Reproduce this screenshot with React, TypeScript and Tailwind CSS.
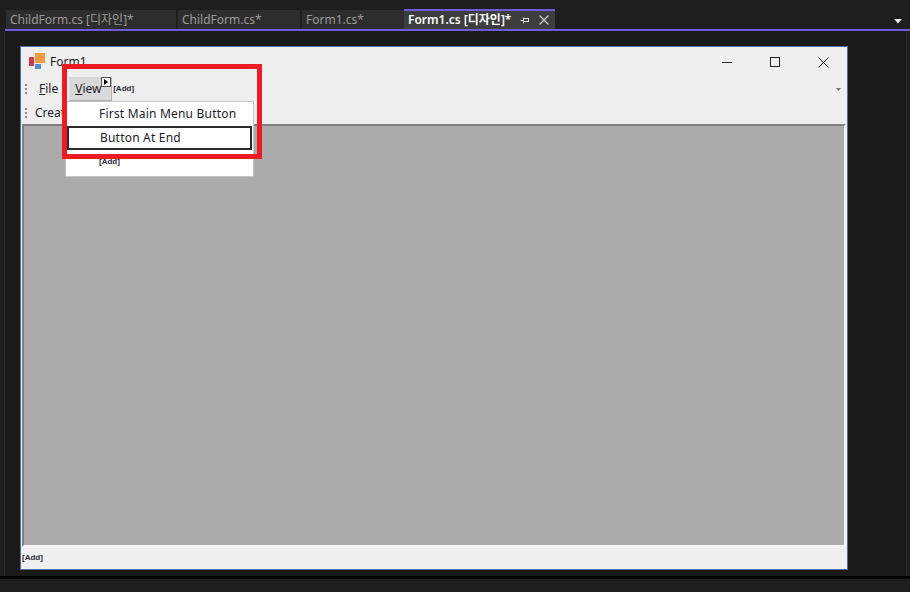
import React from 'react';

const FONT = "font-['Noto_Sans','Noto_Sans_CJK_KR',sans-serif]";

function Grip() {
  return (
    <div className="flex flex-col gap-[2px] w-[2px] shrink-0">
      <div className="w-[2px] h-[2px] bg-[#8a8a8a]" />
      <div className="w-[2px] h-[2px] bg-[#8a8a8a]" />
      <div className="w-[2px] h-[2px] bg-[#8a8a8a]" />
    </div>
  );
}

function AddLabel({ className = '' }: { className?: string }) {
  return <span className={`text-[8px] leading-none font-bold font-['Liberation_Sans',sans-serif] text-[#2a2a3a] ${className}`}>[Add]</span>;
}

function Tab({ label, width, gap }: { label: string; width: string; gap: string }) {
  return (
    <div className={`${width} ${gap} h-[19px] bg-[#2d2d2d] text-[#9a9a9a] text-[12px] leading-[19px] pl-[4px] whitespace-nowrap overflow-hidden`}>
      {label}
    </div>
  );
}

export default function App() {
  return (
    <div className={`relative w-[910px] h-[592px] overflow-hidden bg-[#1e1e1e] ${FONT}`}>
      {/* document tabs */}
      <div className="h-[29px] pt-[10px] pl-[6px] pr-[8px] flex items-start">
        <Tab label="ChildForm.cs [디자인]*" width="w-[170px]" gap="mr-[2px]" />
        <Tab label="ChildForm.cs*" width="w-[122px]" gap="mr-[2px]" />
        <Tab label="Form1.cs*" width="w-[102px]" gap="mr-0" />
        <div className="w-[151px] h-[20px] -mt-[1px] border-t-2 border-[#6f5bdc] bg-[#3d3d3d] text-white text-[12px] font-semibold leading-[18px] pl-[4px] flex items-center whitespace-nowrap">
          <span>Form1.cs [디자인]*</span>
          <svg className="ml-[9px]" width="10" height="10" viewBox="0 0 10 10" fill="none" stroke="#e0e0e0">
            <path d="M0.5 5.5H3M3.5 2.5V8.5M3.5 3.5H9M3.5 6.5H9M8.5 3.5V6.5" />
          </svg>
          <svg className="ml-[9px]" width="10" height="10" viewBox="0 0 10 10" fill="none" stroke="#d0d0d0" strokeWidth="1.2">
            <path d="M0.5 0.5L9.5 9.5M9.5 0.5L0.5 9.5" />
          </svg>
        </div>
        <svg className="ml-auto mt-[9px]" width="8" height="5" viewBox="0 0 8 5">
          <path d="M0 0H8L4 4.5Z" fill="#e8e8e8" />
        </svg>
      </div>
      <div className="ml-[5px] h-[2px] bg-[#6f5bdc]" />

      {/* designer surface */}
      <div className="ml-[4px] mr-[3px] h-[545px] bg-[#1a1a1a] border-l border-r border-[#2a2a2a] pt-[15px] pl-[15px]">
        <div className="w-[828px] h-[524px] border border-[#4f6f9f] bg-[#efefef] flex flex-col">
          <div className="h-[30px] flex items-center pl-[8px] shrink-0">
            <svg width="17" height="17" viewBox="0 0 17 17" className="mt-[-1px]">
              <rect x="0" y="4" width="5" height="9" fill="#d2394b" />
              <rect x="6" y="0" width="10" height="10" fill="#f29b3f" />
              <rect x="6" y="11" width="6" height="5" fill="#4f8fcf" />
            </svg>
            <span className="ml-[4px] text-[12px] text-[#1a1a2a]">Form1</span>
            <div className="ml-auto flex items-center">
              <div className="w-[10px] h-px bg-[#222]" />
              <div className="ml-[38px] w-[10px] h-[10px] border border-[#222]" />
              <svg className="ml-[38px] mr-[18px]" width="11" height="11" viewBox="0 0 11 11" stroke="#222">
                <path d="M0.5 0.5L10.5 10.5M10.5 0.5L0.5 10.5" />
              </svg>
            </div>
          </div>

          <div className="h-[24px] flex items-center pl-[4px] shrink-0 text-[12px] text-[#1a1a2a]">
            <Grip />
            <span className="ml-[12px]"><span className="underline">F</span>ile</span>
            <div className="relative ml-[11px] w-[43px] h-[24px] bg-[#d9d9d9] border-r border-b border-[#b0b0b0] flex items-center pl-[6px]">
              <span><span className="underline">V</span>iew</span>
              <div className="absolute left-[32px] top-0 w-[10px] h-[10px] bg-white border border-[#555] flex items-center justify-center">
                <div className="w-0 h-0 border-y-[3px] border-y-transparent border-l-[4px] border-l-black" />
              </div>
            </div>
            <AddLabel className="ml-[1px]" />
            <svg className="ml-auto mr-[6px]" width="5" height="3" viewBox="0 0 5 3">
              <path d="M0 0H5L2.5 3Z" fill="#777" />
            </svg>
          </div>

          <div className="h-[23px] flex items-center pl-[4px] shrink-0 text-[12px] text-[#1a1a2a]">
            <Grip />
            <span className="ml-[8px]">Create</span>
          </div>

          <div className="mx-px flex-1 bg-[#ababab] border-t-2 border-l-2 border-[#808080] border-r-2 border-r-[#f4f4f4] border-b-2 border-b-[#f4f4f4]" />

          <div className="h-[22px] flex items-center pl-px shrink-0">
            <AddLabel />
          </div>
        </div>
      </div>

      <div className="h-[3px] bg-black" />

      {/* dropdown of the View menu */}
      <div className="absolute left-[65px] top-[101px] w-[189px] h-[76px] bg-white border border-[#c4c4c4] text-[12px] text-[#1a1a2a]">
        <div className="h-[24px] flex items-center pl-[33px] tracking-[0.2px]">First Main Menu Button</div>
        <div className="mx-[1px] h-[24px] flex items-center pl-[31px] border-2 border-[#2a2a2a] tracking-[0.2px]">Button At End</div>
        <div className="h-[24px] flex items-center pl-[33px]"><AddLabel /></div>
      </div>

      {/* red highlight */}
      <div className="absolute left-[62px] top-[64px] w-[200px] h-[95px] border-[5px] border-[#ed1c24]" />
    </div>
  );
}
